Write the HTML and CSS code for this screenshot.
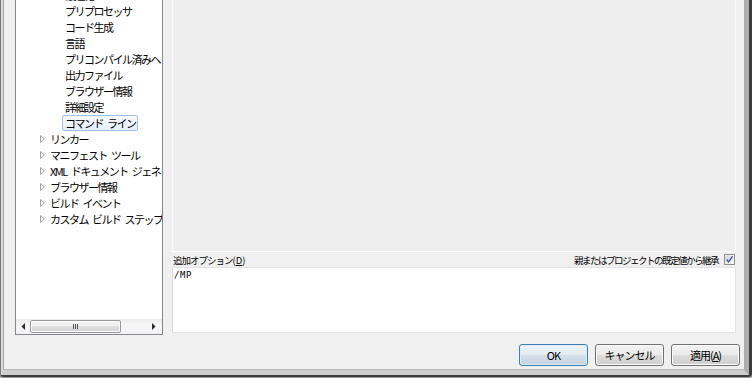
FILE: index.html
```html
<!DOCTYPE html>
<html lang="ja">
<head>
<meta charset="utf-8">
<title>プロパティ ページ</title>
<link rel="stylesheet" href="styles.css">
</head>
<body>
<div class="window">
 <div class="outer">
  <div class="frame">
   <div class="client">
    <div class="main">
     <div class="tree">
      <div class="tree-view">
       <ul class="tree-list">
        <li class="row l2"><span class="exp"></span><span class="label">最適化</span></li>
        <li class="row l2"><span class="exp"></span><span class="label">プリプロセッサ</span></li>
        <li class="row l2"><span class="exp"></span><span class="label">コード生成</span></li>
        <li class="row l2"><span class="exp"></span><span class="label">言語</span></li>
        <li class="row l2"><span class="exp"></span><span class="label">プリコンパイル済みヘッダー</span></li>
        <li class="row l2"><span class="exp"></span><span class="label">出力ファイル</span></li>
        <li class="row l2"><span class="exp"></span><span class="label">ブラウザー情報</span></li>
        <li class="row l2"><span class="exp"></span><span class="label">詳細設定</span></li>
        <li class="row l2"><span class="exp"></span><span class="label sel">コマンド ライン</span></li>
        <li class="row l1"><span class="exp"><svg width="5" height="8" viewBox="0 0 5 8"><path d="M0.5 0.5 L4.5 4 L0.5 7.5 Z" fill="#fff" stroke="#a6a6a6"/></svg></span><span class="label">リンカー</span></li>
        <li class="row l1"><span class="exp"><svg width="5" height="8" viewBox="0 0 5 8"><path d="M0.5 0.5 L4.5 4 L0.5 7.5 Z" fill="#fff" stroke="#a6a6a6"/></svg></span><span class="label">マニフェスト ツール</span></li>
        <li class="row l1"><span class="exp"><svg width="5" height="8" viewBox="0 0 5 8"><path d="M0.5 0.5 L4.5 4 L0.5 7.5 Z" fill="#fff" stroke="#a6a6a6"/></svg></span><span class="label">XML ドキュメント ジェネレーター</span></li>
        <li class="row l1"><span class="exp"><svg width="5" height="8" viewBox="0 0 5 8"><path d="M0.5 0.5 L4.5 4 L0.5 7.5 Z" fill="#fff" stroke="#a6a6a6"/></svg></span><span class="label">ブラウザー情報</span></li>
        <li class="row l1"><span class="exp"><svg width="5" height="8" viewBox="0 0 5 8"><path d="M0.5 0.5 L4.5 4 L0.5 7.5 Z" fill="#fff" stroke="#a6a6a6"/></svg></span><span class="label">ビルド イベント</span></li>
        <li class="row l1"><span class="exp"><svg width="5" height="8" viewBox="0 0 5 8"><path d="M0.5 0.5 L4.5 4 L0.5 7.5 Z" fill="#fff" stroke="#a6a6a6"/></svg></span><span class="label">カスタム ビルド ステップ</span></li>
       </ul>
      </div>
      <div class="hscroll">
       <div class="sb-btn sb-left"><svg width="4" height="7" viewBox="0 0 4 7"><path d="M4 0 L0.5 3.5 L4 7 Z" fill="#2a2a2a"/></svg></div>
       <div class="track"><div class="thumb"><span class="grip"></span></div></div>
       <div class="sb-btn sb-right"><svg width="4" height="7" viewBox="0 0 4 7"><path d="M0 0 L3.5 3.5 L0 7 Z" fill="#2a2a2a"/></svg></div>
      </div>
     </div>
     <div class="props">
      <div class="grid-area"></div>
      <div class="opt-row">
       <span class="opt-label"><span class="cjk">追加オプション</span>(<u>D</u>)</span>
       <span class="inherit"><span class="inherit-text">親またはプロジェクトの既定値から継承</span><svg class="checkbox" width="11" height="11" viewBox="0 0 11 11"><defs><linearGradient id="cb" x1="0" y1="0" x2="1" y2="1"><stop offset="0" stop-color="#d4d8dd"/><stop offset="1" stop-color="#f6f7f8"/></linearGradient></defs><rect x="0.5" y="0.5" width="10" height="10" fill="#f5f5f5" stroke="#8e8f8f"/><rect x="1.5" y="1.5" width="8" height="8" fill="url(#cb)"/><path d="M2.6 5.4 L4.5 7.8 L8.6 2.4" fill="none" stroke="#3b57a0" stroke-width="1.4"/></svg></span>
      </div>
      <div class="textbox">/MP</div>
     </div>
    </div>
    <div class="buttons">
     <button class="btn default">OK</button>
     <button class="btn">キャンセル</button>
     <button class="btn">適用(<u>A</u>)</button>
    </div>
   </div>
  </div>
 </div>
</div>
</body>
</html>
```
FILE: styles.css
```css
* { box-sizing: border-box; }
html, body { margin: 0; padding: 0; }
body {
  width: 752px;
  height: 378px;
  overflow: hidden;
  background: #9a9a9a;
  color: #000;
  font-family: "Noto Sans CJK JP", "Noto Sans", sans-serif;
}
.window {
  width: 752px;
  height: 378px;
  padding-bottom: 1px;
  display: flex;
}
.outer {
  flex: 1;
  display: flex;
  border-left: 1px solid #767676;
  border-right: 3px solid #3c3c3c;
  border-bottom: 2px solid #3c3c3c;
  border-bottom-left-radius: 4px;
  border-bottom-right-radius: 4px;
}
.frame {
  flex: 1;
  display: flex;
  border-left: 2px solid #dcdcdc;
  border-right: 5px solid #adadad;
  border-bottom: 5px solid #cdcdcd;
}
.client {
  flex: 1;
  display: flex;
  flex-direction: column;
  background: #f0f0f0;
  border-left: 1px solid #a3a3a3;
  border-bottom: 1px solid #b8b8b8;
}
.main {
  height: 335px;
  display: flex;
  gap: 9px;
  padding: 0 8px 0 11px;
}

/* tree */
.tree {
  width: 148px;
  height: 335px;
  flex: none;
  display: flex;
  flex-direction: column;
  background: #fff;
  border: 1px solid #828790;
  border-top: 0;
}
.tree-view {
  flex: 1;
  overflow: hidden;
}
.tree-list {
  list-style: none;
  margin: -13px 0 0;
  padding: 0;
}
.row {
  display: flex;
  align-items: center;
  height: 16px;
  white-space: nowrap;
}
.l1 { padding-left: 24px; }
.l2 { padding-left: 39px; }
.exp {
  width: 7px;
  height: 16px;
  flex: none;
  display: flex;
  align-items: center;
}
.exp svg { display: block; }
.label {
  border: 1px solid transparent;
  border-radius: 2px;
  padding: 0 2px;
  height: 16px;
  line-height: 14px;
  font-size: 11px;
  letter-spacing: -1.5px;
  word-spacing: 3px;
}
.label.sel {
  border-color: #9ec2e8;
  background: linear-gradient(#fafcff, #e4eefb);
}

/* horizontal scrollbar */
.hscroll {
  height: 15px;
  flex: none;
  display: flex;
  background: linear-gradient(#ececec, #f6f6f6 40%, #f2f2f2);
}
.sb-btn {
  display: flex;
  align-items: center;
  justify-content: center;
}
.sb-btn svg { display: block; }
.sb-left { width: 14px; }
.sb-right { width: 16px; }
.track {
  flex: 1;
  display: flex;
  align-items: center;
}
.thumb {
  width: 91px;
  height: 13px;
  border: 1px solid #9a9a9a;
  border-radius: 2px;
  background: linear-gradient(#f6f6f6, #ececec 45%, #dcdcdc 55%, #d4d4d4);
  box-shadow: inset 0 0 0 1px #fbfbfb;
  display: flex;
  align-items: center;
  justify-content: center;
}
.grip {
  width: 6px;
  height: 5px;
  background: repeating-linear-gradient(to right, #555 0 1px, transparent 1px 2px);
}

/* right property panel */
.props {
  width: 564px;
  height: 335px;
  flex: none;
  display: flex;
  flex-direction: column;
}
.grid-area {
  flex: 1;
  background: #eeeeee;
  border-left: 1px solid #fafafa;
  border-right: 1px solid #fafafa;
  border-bottom: 1px solid #fcfcfc;
}
.opt-row {
  height: 15px;
  flex: none;
  display: flex;
  align-items: center;
  justify-content: space-between;
  padding: 0 1px;
  font-size: 9.5px;
  line-height: 12px;
  white-space: nowrap;
}
.opt-label .cjk { letter-spacing: -1px; }
.opt-label { letter-spacing: 0; }
.inherit {
  display: flex;
  align-items: center;
  gap: 6px;
}
.inherit-text { letter-spacing: -1.5px; }
.checkbox { display: block; }
.textbox {
  height: 66px;
  flex: none;
  margin-bottom: 2px;
  background: #fff;
  border: 1px solid #e2e3e6;
  border-left-color: #dcdcdc;
  padding: 2px 1px;
  font-family: "DejaVu Sans Mono", monospace;
  font-size: 9px;
  letter-spacing: 0.6px;
  line-height: 11px;
}

/* buttons */
.buttons {
  flex: 1;
  display: flex;
  justify-content: flex-end;
  align-items: flex-start;
  gap: 7px;
  padding: 9px 4px 0 0;
}
.btn {
  width: 69px;
  height: 22px;
  margin: 0;
  padding: 0;
  border: 1px solid #707070;
  border-radius: 3px;
  background: linear-gradient(#f2f2f2, #ebebeb 48%, #dddddd 52%, #cfcfcf);
  box-shadow: inset 0 0 0 1px #fcfcfc;
  font-family: "Noto Sans CJK JP", sans-serif;
  font-size: 11px;
  letter-spacing: -1px;
  line-height: 18px;
  color: #000;
}
.btn.default {
  border-color: #3c7fb1;
  background: linear-gradient(#eef3f7, #e3ebf1 48%, #d3dee8 52%, #c6d5e2);
  box-shadow: inset 0 0 0 1px #d6ecf9;
}
```
